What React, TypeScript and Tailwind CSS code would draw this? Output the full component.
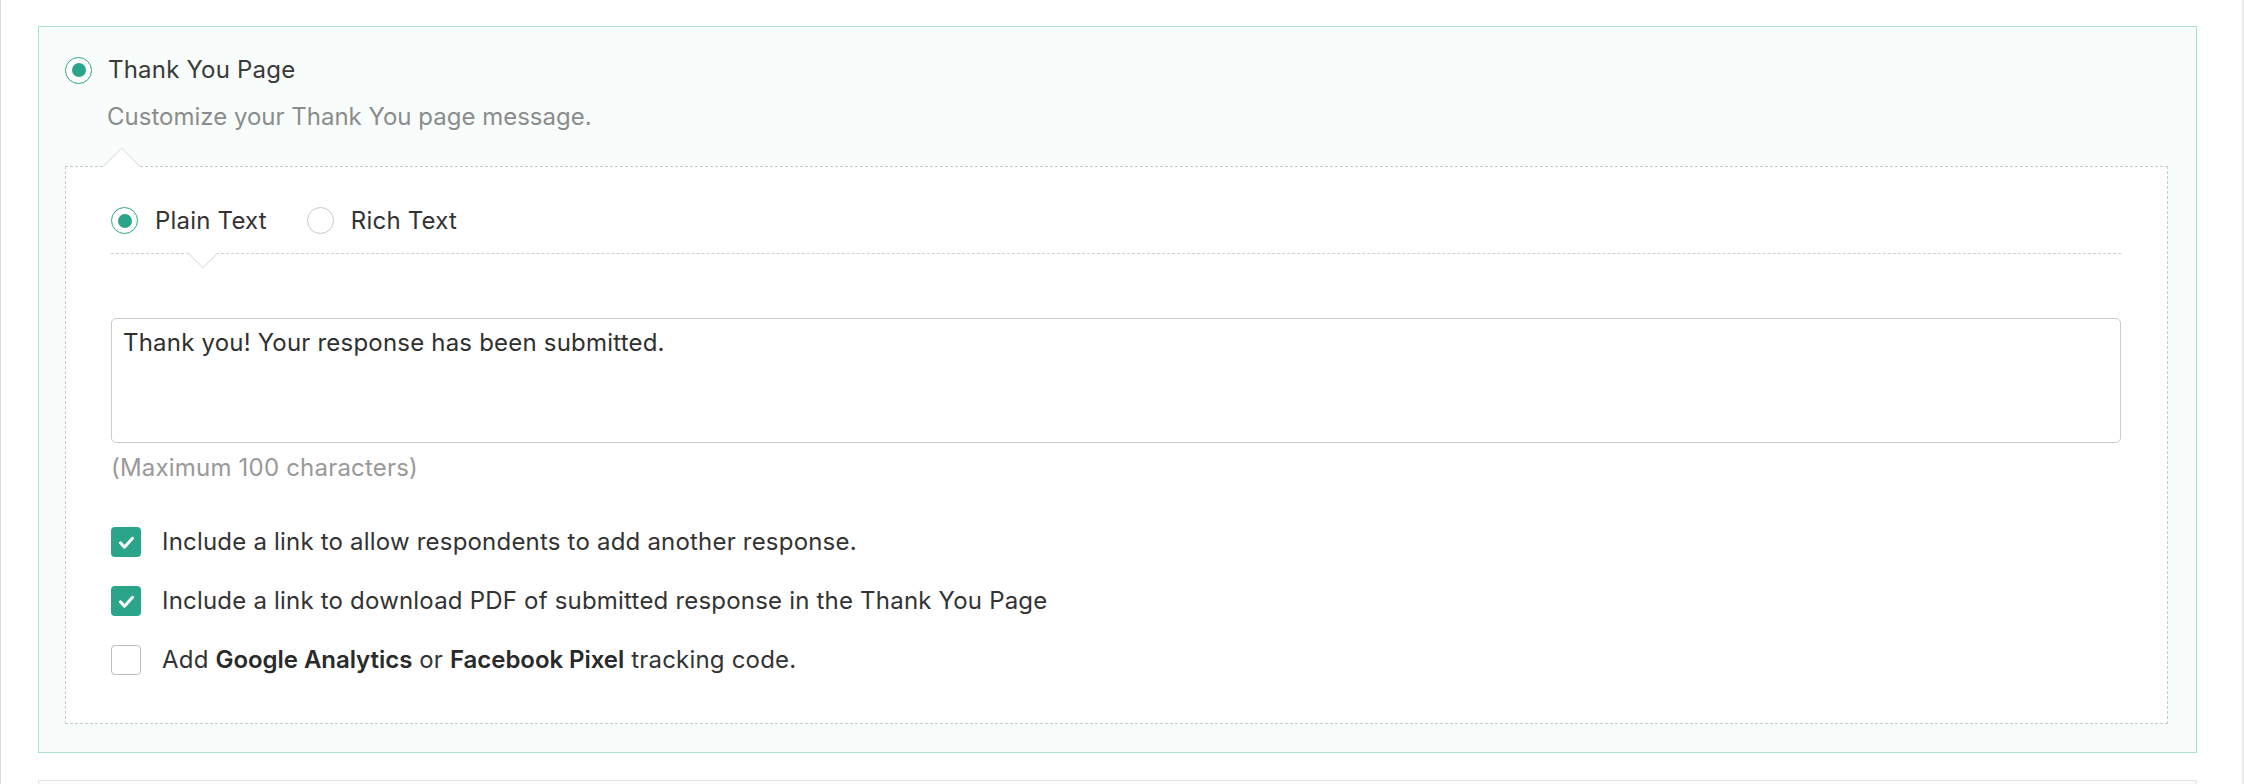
import React, { useState } from 'react';

function Radio({ checked }: { checked: boolean }) {
  return (
    <span
      className={`flex h-[27px] w-[27px] shrink-0 items-center justify-center rounded-full border-[1.5px] bg-white ${
        checked ? 'border-[#2ba58a]' : 'border-[#c9c9c9]'
      }`}
    >
      {checked && <span className="h-[14px] w-[14px] rounded-full bg-[#2ba58a]" />}
    </span>
  );
}

function Checkbox({ checked }: { checked: boolean }) {
  if (!checked) {
    return <span className="h-[30px] w-[30px] shrink-0 rounded-[4px] border border-[#bdbdbd] bg-white" />;
  }
  return (
    <span className="flex h-[30px] w-[30px] shrink-0 items-center justify-center rounded-[4px] bg-[#2ba58a]">
      <svg width="21" height="21" viewBox="0 0 16 16" fill="none">
        <path d="M3.4 8.2l3 3.4L12.6 4.8" stroke="white" strokeWidth="2.3" strokeLinecap="round" strokeLinejoin="round" />
      </svg>
    </span>
  );
}

export default function App() {
  const [mode, setMode] = useState<'plain' | 'rich'>('plain');
  const [opts, setOpts] = useState([true, true, false]);

  const toggle = (i: number) => setOpts(opts.map((v, j) => (j === i ? !v : v)));

  return (
    <div
      className="flex h-[784px] w-[2244px] overflow-hidden border-l border-[#dcdcdc] bg-white text-[24px] tracking-[0.2px] text-[#333]"
      style={{ fontFamily: 'Inter, "Noto Sans", sans-serif' }}
    >
      <div className="flex flex-1 flex-col gap-[27px] pl-[37px] pr-[45px] pt-[26px]">
        {/* Thank You Page card */}
        <div className="border border-[#a6e3d2] bg-[#f8fcfb] pb-[28px] pl-[26px] pr-[28px] pt-[27px]">
          <div className="flex items-center gap-[16px]">
            <Radio checked />
            <span className="leading-[32px] text-[#3a3a3a]">Thank You Page</span>
          </div>
          <p className="mt-[15px] pl-[42px] leading-[32px] tracking-normal text-[#8c8c8c]">
            Customize your Thank You page message.
          </p>

          <div className="relative mt-[33px] border border-dashed border-[#c8c8c8] bg-white pb-[48px] pl-[45px] pr-[46px] pt-[40px]">
            {/* notch */}
            <span className="absolute left-[42px] top-[-14px] h-[27px] w-[27px] rotate-45 border-l-[1.5px] border-t-[1.5px] border-[#dedede] bg-white" />

            <div className="relative flex items-center border-b border-dashed border-[#cfcfcf] pb-[19px]">
              <button className="flex items-center gap-[17px]" onClick={() => setMode('plain')}>
                <Radio checked={mode === 'plain'} />
                <span className="leading-[27px]">Plain Text</span>
              </button>
              <button className="ml-[40px] flex items-center gap-[17px]" onClick={() => setMode('rich')}>
                <Radio checked={mode === 'rich'} />
                <span className="leading-[27px]">Rich Text</span>
              </button>
              <span className="absolute bottom-[-11px] left-[81px] h-[22px] w-[22px] rotate-45 border-b-[1.5px] border-r-[1.5px] border-[#dedede] bg-white" />
            </div>

            <textarea
              className="mt-[64px] block h-[125px] w-full resize-none rounded-[5px] border border-[#cccccc] bg-white pl-[11px] pt-[8px] leading-[32px] text-[#303030] outline-none"
              defaultValue="Thank you! Your response has been submitted."
            />
            <p className="mt-[9px] leading-[32px] text-[#999]">(Maximum 100 characters)</p>

            <div className="mt-[43px] flex flex-col gap-[29px]">
              <label className="flex items-center gap-[21px]" onClick={() => toggle(0)}>
                <Checkbox checked={opts[0]} />
                <span className="leading-[30px]">Include a link to allow respondents to add another response.</span>
              </label>
              <label className="flex items-center gap-[21px]" onClick={() => toggle(1)}>
                <Checkbox checked={opts[1]} />
                <span className="leading-[30px]">Include a link to download PDF of submitted response in the Thank You Page</span>
              </label>
              <label className="flex items-center gap-[21px]" onClick={() => toggle(2)}>
                <Checkbox checked={opts[2]} />
                <span className="leading-[30px]">
                  Add <span className="font-semibold tracking-[-0.05px] text-[#2a2a2a]">Google Analytics</span> or{' '}
                  <span className="font-semibold tracking-[-0.05px] text-[#2a2a2a]">Facebook Pixel</span> tracking code.
                </span>
              </label>
            </div>
          </div>
        </div>

        {/* next section (cut off) */}
        <div className="h-[60px] shrink-0 border border-[#e5e5e5] bg-[#fafafa]" />
      </div>
      <div className="w-[2px] shrink-0 bg-[#ebebeb]" />
    </div>
  );
}
